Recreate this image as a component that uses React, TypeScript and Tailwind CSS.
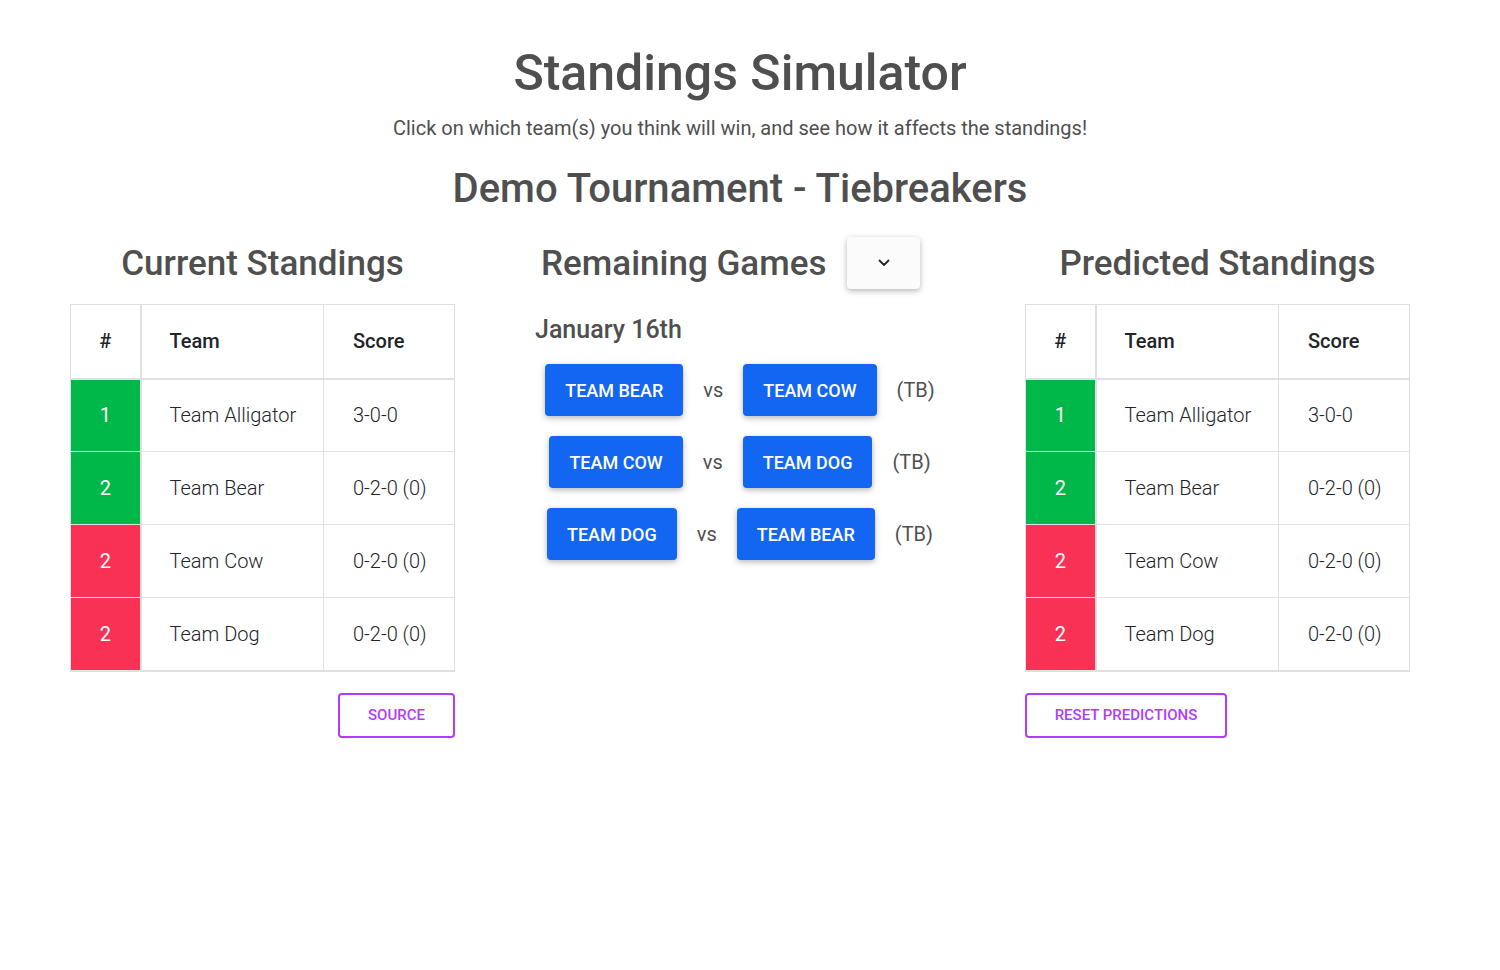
import React from "react";

type Row = { rank: string; team: string; score: string; color: "green" | "red" };

const rows: Row[] = [
  { rank: "1", team: "Team Alligator", score: "3-0-0", color: "green" },
  { rank: "2", team: "Team Bear", score: "0-2-0 (0)", color: "green" },
  { rank: "2", team: "Team Cow", score: "0-2-0 (0)", color: "red" },
  { rank: "2", team: "Team Dog", score: "0-2-0 (0)", color: "red" },
];

function StandingsTable() {
  return (
    <table className="w-[384px] table-fixed border-collapse border border-[#e0e0e0] text-[20px]">
      <colgroup>
        <col className="w-[70px]" />
        <col className="w-[183px]" />
        <col className="w-[131px]" />
      </colgroup>
      <thead>
        <tr className="h-[74px]">
          <th className="border border-[#e0e0e0] border-b-2 border-r-2 text-center font-medium text-[#212529]">#</th>
          <th className="border border-[#e0e0e0] border-b-2 pl-[28px] text-left font-medium text-[#212529]">Team</th>
          <th className="border border-[#e0e0e0] border-b-2 pl-[29px] text-left font-medium text-[#212529]">Score</th>
        </tr>
      </thead>
      <tbody>
        {rows.map((r, i) => (
          <tr key={i} className={`h-[73px] ${i === rows.length - 1 ? "border-b-2 border-[#e0e0e0]" : ""}`}>
            <td
              className={`border border-[#e0e0e0] border-r-2 text-center font-normal text-white ${
                r.color === "green" ? "bg-[#00b74a]" : "bg-[#f93154]"
              }`}
            >
              {r.rank}
            </td>
            <td className="border border-[#e0e0e0] pl-[28px] font-light text-[#212529]">{r.team}</td>
            <td className="border border-[#e0e0e0] pl-[29px] font-light text-[#212529]">{r.score}</td>
          </tr>
        ))}
      </tbody>
    </table>
  );
}

function GameButton({ label }: { label: string }) {
  return (
    <button className="h-[52px] rounded-[4px] bg-[#1266f1] px-5 text-[18px] font-medium uppercase text-white shadow-[0_2px_5px_0_rgba(0,0,0,0.2),0_2px_10px_0_rgba(0,0,0,0.1)]">
      {label}
    </button>
  );
}

function Game({ a, b }: { a: string; b: string }) {
  return (
    <div className="flex h-[52px] items-center justify-center gap-5 text-[20px] text-[#4f4f4f]">
      <GameButton label={a} />
      <span>vs</span>
      <GameButton label={b} />
      <span>(TB)</span>
    </div>
  );
}

export default function App() {
  return (
    <div
      className="min-h-[970px] w-[1480px] bg-white text-[#4f4f4f]"
      style={{ fontFamily: "Roboto, 'Noto Sans', sans-serif" }}
    >
      <div className="flex flex-col items-center pt-[44px]">
        <h1 className="text-[50px] font-medium leading-[58px] text-[#4f4f4f]">Standings Simulator</h1>
        <p className="mt-[12px] text-[20px] leading-[28px] text-[#4f4f4f]">
          Click on which team(s) you think will win, and see how it affects the standings!
        </p>
        <h2 className="mt-[23px] text-[40px] font-medium leading-[48px] text-[#4f4f4f]">
          Demo Tournament - Tiebreakers
        </h2>
      </div>

      <div className="mt-[24px] flex pl-[70px]">
        {/* Left column */}
        <div className="flex w-[385px] flex-col">
          <div className="flex h-[52px] items-center justify-center">
            <h3 className="mt-[2px] text-[35px] font-medium leading-[44px] text-[#4f4f4f]">Current Standings</h3>
          </div>
          <div className="mt-[15px]">
            <StandingsTable />
          </div>
          <div className="mt-[21px] flex justify-end">
            <button className="h-[45px] w-[117px] rounded-[4px] border-2 border-[#b23cfd] text-[15px] font-medium uppercase text-[#b23cfd]">
              Source
            </button>
          </div>
        </div>

        {/* Middle column */}
        <div className="flex w-[570px] flex-col">
          <div className="flex h-[52px] items-center gap-[21px] pl-[86px]">
            <h3 className="mt-[2px] text-[35px] font-medium leading-[44px] text-[#4f4f4f]">Remaining Games</h3>
            <button className="flex h-[52px] w-[73px] items-center justify-center rounded-[4px] bg-[#fbfbfb] shadow-[0_2px_5px_0_rgba(0,0,0,0.2),0_2px_10px_0_rgba(0,0,0,0.1)]">
              <svg width="12" height="8" viewBox="0 0 12 8" fill="none">
                <path d="M1.5 1.5 L6 6 L10.5 1.5" stroke="#262626" strokeWidth="1.8" strokeLinecap="round" strokeLinejoin="round" />
              </svg>
            </button>
          </div>
          <div className="mt-[25px] pl-[80px] text-[25px] font-medium leading-[32px] text-[#4f4f4f]">January 16th</div>
          <div className="mt-[18px] flex flex-col gap-5">
            <Game a="Team Bear" b="Team Cow" />
            <Game a="Team Cow" b="Team Dog" />
            <Game a="Team Dog" b="Team Bear" />
          </div>
        </div>

        {/* Right column */}
        <div className="flex w-[385px] flex-col">
          <div className="flex h-[52px] items-center justify-center">
            <h3 className="mt-[2px] text-[35px] font-medium leading-[44px] text-[#4f4f4f]">Predicted Standings</h3>
          </div>
          <div className="mt-[15px]">
            <StandingsTable />
          </div>
          <div className="mt-[21px] flex justify-start">
            <button className="h-[45px] w-[202px] rounded-[4px] border-2 border-[#b23cfd] text-[15px] font-medium uppercase text-[#b23cfd]">
              Reset Predictions
            </button>
          </div>
        </div>
      </div>
    </div>
  );
}
